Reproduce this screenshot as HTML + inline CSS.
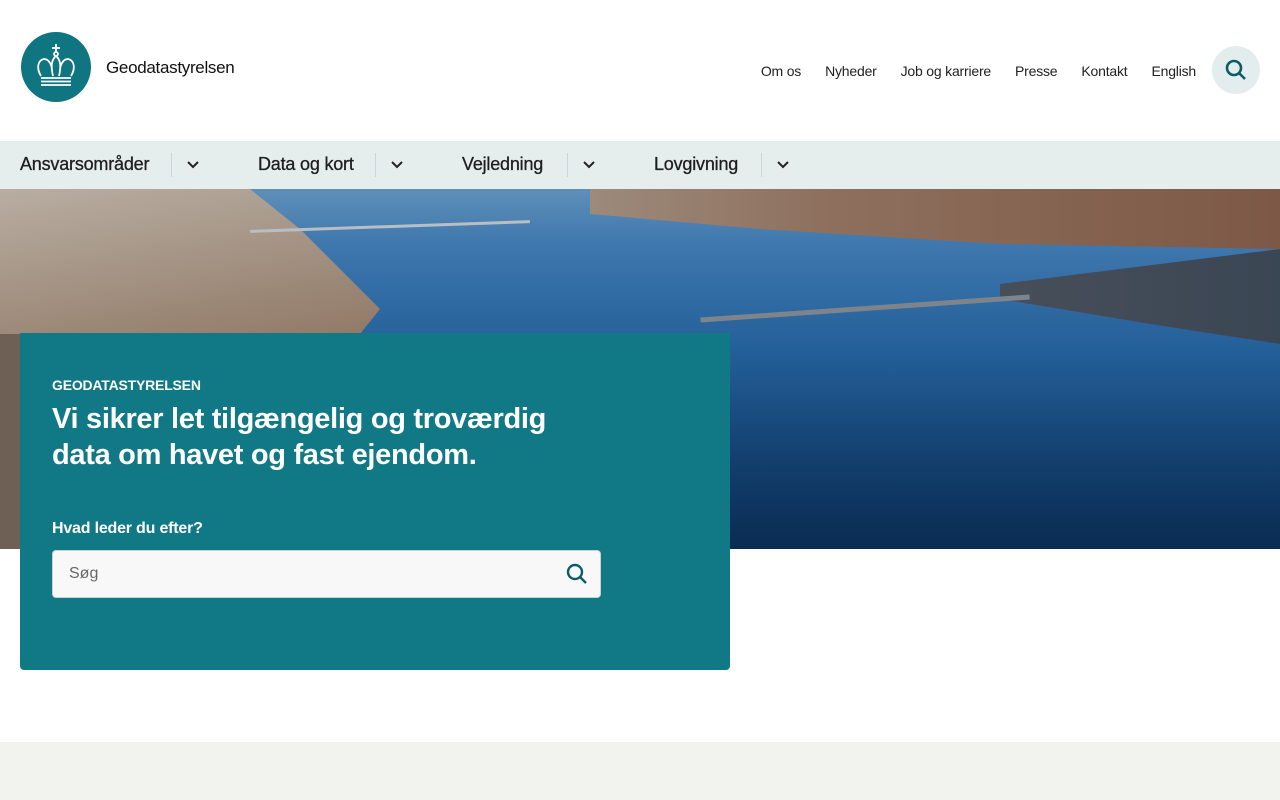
<!DOCTYPE html>
<html><head><meta charset="utf-8"><style>
*{margin:0;padding:0;box-sizing:border-box}
body{width:1280px;height:800px;overflow:hidden;background:#fff;font-family:"Liberation Sans",Arial,sans-serif;color:#1a1a1a;position:relative}
.top{position:absolute;top:0;left:0;width:1280px;height:141px}
.logo{position:absolute;left:21px;top:32px;width:70px;height:70px;border-radius:50%;background:#0f7580}
.brand{position:absolute;left:106px;top:58px;font-size:17px;letter-spacing:-0.3px;color:#111}
.links{position:absolute;right:84px;top:63px;display:flex;gap:24px;font-size:14px;letter-spacing:-0.2px;color:#222}
.sbtn{position:absolute;left:1212px;top:46px;width:48px;height:48px;border-radius:50%;background:#e3eded}
.nav{position:absolute;top:141px;left:0;width:1280px;height:48px;background:#e5eeed}
.ni{position:absolute;top:13px;font-size:18px;color:#1e1e1e;letter-spacing:-0.2px;-webkit-text-stroke:0.3px #1e1e1e}
.sep{position:absolute;top:12px;width:1px;height:24px;background:#cdd6d6}
.chev{position:absolute;top:18px}
.hero{position:absolute;top:189px;left:0;width:1280px;height:360px;overflow:hidden;
background:linear-gradient(180deg,#5f8fb8 0%,#3f78ae 15%,#235f99 45%,#133f6e 75%,#0a2c52 100%)}
.c1{position:absolute;left:0;top:0;width:400px;height:360px;background:linear-gradient(170deg,#b8aea2 0%,#9c8877 35%,#8a6e5c 60%,#5d5550 100%);clip-path:polygon(0 0,250px 0,300px 40px,380px 120px,360px 145px,0 145px)}
.c1b{position:absolute;left:0;top:145px;width:20px;height:215px;background:#6f6055}
.c2{position:absolute;left:0;top:0;width:1280px;height:360px;background:linear-gradient(90deg,#c8c3b8 0%,#a9a195 30%,#8e6f5d 65%,#7d5846 100%);clip-path:polygon(590px 0,1280px 0,1280px 60px,1000px 55px,760px 40px,590px 25px)}
.c3{position:absolute;left:0;top:0;width:1280px;height:360px;background:linear-gradient(90deg,#9a8a80,#5b5d63 40%,#3b4654);clip-path:polygon(1000px 95px,1280px 60px,1280px 155px,1150px 135px,1000px 110px)}
.br1{position:absolute;left:700px;top:117px;width:330px;height:5px;background:#7d848c;transform:rotate(-4deg)}
.br2{position:absolute;left:250px;top:36px;width:280px;height:3px;background:#b9bec4;transform:rotate(-2deg)}
.card{position:absolute;left:20px;top:333px;width:710px;height:337px;background:#117985;border-radius:0 0 4px 4px;color:#fff}
.card .k{position:absolute;left:32px;top:44px;font-size:14px;font-weight:bold;letter-spacing:-0.2px}
.card h1{position:absolute;left:32px;top:68px;width:525px;font-size:29px;line-height:36px;font-weight:bold;letter-spacing:-0.3px}
.card .l{position:absolute;left:32px;top:187px;font-size:16px;font-weight:bold;letter-spacing:-0.2px}
.inp{position:absolute;left:32px;top:217px;width:549px;height:48px;background:#f8f8f8;border:1px solid #c9d2d2;border-radius:4px;color:#666;font-size:16px;padding:14px 16px}
.foot{position:absolute;top:742px;left:0;width:1280px;height:58px;background:#f2f2ee}
</style></head><body>
<div class="top">
<div class="logo"><svg width="70" height="70" viewBox="0 0 70 70" fill="none" stroke="#fff" stroke-width="1.8">
<path d="M35 12v8M31 16h8"/><circle cx="35" cy="22" r="2"/>
<path d="M20 44c-5-8-3-16 3-17 5 0 8 6 8 12M50 44c5-8 3-16-3-17-5 0-8 6-8 12M35 24c-5 4-5 12-3 20M35 24c5 4 5 12 3 20"/>
<path d="M20 46h30M20 49.5h30M20 53h30"/></svg></div>
<div class="brand">Geodatastyrelsen</div>
<div class="links"><span>Om os</span><span>Nyheder</span><span>Job og karriere</span><span>Presse</span><span>Kontakt</span><span>English</span></div>
<div class="sbtn"><svg width="48" height="48" viewBox="0 0 48 48" fill="none" stroke="#0b5c66" stroke-width="2.6"><circle cx="22" cy="22" r="7"/><path d="M27 27l6 6"/></svg></div>
</div>
<div class="nav">
<span class="ni" style="left:20px">Ansvarsområder</span><div class="sep" style="left:171px"></div>
<svg class="chev" style="left:186px" width="14" height="12" viewBox="0 0 14 12" fill="none" stroke="#222" stroke-width="2"><path d="M2 3l5 5 5-5"/></svg>
<span class="ni" style="left:258px">Data og kort</span><div class="sep" style="left:375px"></div>
<svg class="chev" style="left:390px" width="14" height="12" viewBox="0 0 14 12" fill="none" stroke="#222" stroke-width="2"><path d="M2 3l5 5 5-5"/></svg>
<span class="ni" style="left:462px">Vejledning</span><div class="sep" style="left:567px"></div>
<svg class="chev" style="left:582px" width="14" height="12" viewBox="0 0 14 12" fill="none" stroke="#222" stroke-width="2"><path d="M2 3l5 5 5-5"/></svg>
<span class="ni" style="left:654px">Lovgivning</span><div class="sep" style="left:761px"></div>
<svg class="chev" style="left:776px" width="14" height="12" viewBox="0 0 14 12" fill="none" stroke="#222" stroke-width="2"><path d="M2 3l5 5 5-5"/></svg>
</div>
<div class="hero"><div class="c1"></div><div class="c1b"></div><div class="c2"></div><div class="c3"></div><div class="br1"></div><div class="br2"></div></div>
<div class="card">
<div class="k">GEODATASTYRELSEN</div>
<h1>Vi sikrer let tilgængelig og troværdig data om havet og fast ejendom.</h1>
<div class="l">Hvad leder du efter?</div>
<div class="inp">Søg<svg style="position:absolute;right:10px;top:10px" width="26" height="26" viewBox="0 0 26 26" fill="none" stroke="#0b5c66" stroke-width="2.4"><circle cx="11" cy="11" r="7"/><path d="M16 16l6 6"/></svg></div>
</div>
<div class="foot"></div>
</body></html>
